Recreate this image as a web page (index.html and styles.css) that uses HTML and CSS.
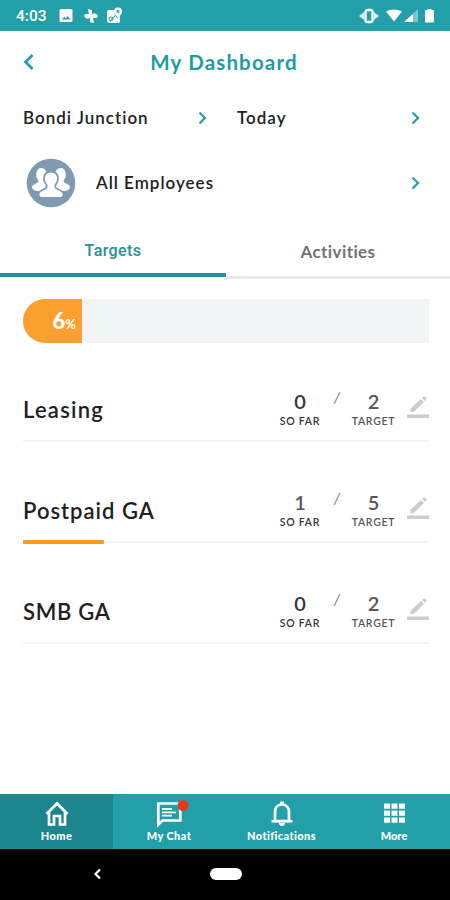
FILE: index.html
```html
<!DOCTYPE html>
<html lang="en">
<head>
<meta charset="utf-8">
<title>My Dashboard</title>
<link rel="stylesheet" href="styles.css">
</head>
<body>
<div class="status">
  <span class="clock">4:03</span>
  <svg class="status-left" width="66" height="18" viewBox="0 0 66 18">
    <path fill="#fff" fill-rule="evenodd" d="M2 2h10q1.500 0 1.500 1.500v10q0 1.500-1.500 1.500h-10q-1.500 0-1.500-1.500v-10q0-1.500 1.500-1.500zM3 12.500h8.500l-2.700-3.500-2 2.300-1.500-1.500z"/>
    <path fill="#fff" d="M29 2l4 1v4q4-2 6 2l-1 2h-4l1 5-4-1v-4q-4 2-6-2l1-2h4z"/>
    <path fill="#fff" d="M50 3h6q-2 5 2 8l3-2v5q0 2-2 2h-9q-2 0-2-2v-9q0-2 2-2z"/>
    <path fill="#fff" d="M59 .5a4 4 0 0 1 4 4q0 3-4 6-4-3-4-6a4 4 0 0 1 4-4z"/>
    <circle cx="59" cy="4.500" r="1.400" fill="#239fa9"/>
    <path d="M51 14l5-5" stroke="#239fa9" fill="none"/>
    <circle cx="52" cy="12" r="2" stroke="#239fa9" fill="none"/>
  </svg>
  <svg class="status-right" width="78" height="18" viewBox="0 0 78 18">
    <path fill="#fff" d="M0 9l5-4v8zM20 9l-5-4v8z" opacity=".8"/>
    <rect x="6.500" y="3" width="7" height="12" rx="2" fill="none" stroke="#fff" stroke-width="2.400"/>
    <path fill="#fff" d="M27 4.500q8-4 16 0l-8 10z"/>
    <path fill="#fff" opacity=".4" d="M59 2v13H45z"/>
    <path fill="#fff" d="M54 7v8h-9z"/>
    <path fill="#fff" d="M67 3h1.500V2h4v1H74q1 0 1 1v10q0 1.500-1 1.500h-7q-1 0-1-1.500V4q0-1 1-1z"/>
  </svg>
</div>
<header class="header">
  <svg class="back" width="12" height="18" viewBox="0 0 12 18"><path d="M9.500 2L2.500 9l7 7"/></svg>
  <h1>My Dashboard</h1>
</header>
<div class="filters">
  <div class="filter place"><span>Bondi Junction</span><svg class="chev" width="9" height="14" viewBox="0 0 9 14"><path d="M1.500 1.500L7 7l-5.500 5.500"/></svg></div>
  <div class="filter"><span>Today</span><svg class="chev" width="9" height="14" viewBox="0 0 9 14"><path d="M1.500 1.500L7 7l-5.500 5.500"/></svg></div>
</div>
<div class="employees">
  <svg width="50" height="50" viewBox="0 0 50 50">
    <circle cx="25" cy="25" r="24.300" fill="#7f9ab1"/>
    <path fill="#fff" d="M15 10c4 0 6 3 5.500 6.500-.3 2-1 3.500-2 4.500 0 3 3 3.500 4 5l-4 7H11q-5-1-5-4c0-3 6-3.500 6.500-5.500 0-1-.5-1.500-1.500-3-1.500-3-1-10.500 4-10.500z"/>
    <path fill="#fff" d="M35 10c-4 0-6 3-5.500 6.500.3 2 1 3.500 2 4.500 0 3-3 3.500-4 5l4 7H39q5-1 5-4c0-3-6-3.500-6.500-5.500 0-1 .5-1.500 1.500-3 1.500-3 1-10.500-4-10.500z"/>
    <path fill="#fff" stroke="#7f9ab1" stroke-width="1.800" d="M25 13.500c5 0 7.500 3.500 7 8-.3 2.500-1.500 4-2.500 5.500-.5 3 .5 3.500 3 4.500 4 1.500 5 3 5 5 0 2.500-1.500 3.500-4 3.500h-17c-2.500 0-4-1-4-3.500 0-2 1-3.500 5-5 2.500-1 3.500-1.500 3-4.500-1-1.500-2.200-3-2.500-5.500-.5-4.500 2-8 7-8z"/>
  </svg>
  <span>All Employees</span>
  <svg class="chev" width="9" height="14" viewBox="0 0 9 14"><path d="M1.500 1.500L7 7l-5.500 5.500"/></svg>
</div>
<nav class="tabs">
  <div class="tab active"><span>Targets</span></div>
  <div class="tab"><span>Activities</span></div>
</nav>
<main>
  <div class="progress"><div class="fill"><b>6</b><small>%</small></div></div>
  <section class="goal">
    <div class="goal-main"><h2 class="leasing">Leasing</h2>
      <div class="num sofar"><strong>0</strong><span>SO FAR</span></div><i>/</i>
      <div class="num"><strong>2</strong><span>TARGET</span></div>
      <svg class="edit" width="22" height="24" viewBox="0 0 22 24"><path d="M3.500 17v-3.200L14 4l3 3L6.700 17zM15 3l1.200-1.200q1-.8 2 0l1 1q.8 1 0 2L18 6z"/><path d="M0 19.500h22v3.500H0z"/></svg>
    </div><div class="track"></div>
  </section>
  <section class="goal">
    <div class="goal-main"><h2>Postpaid GA</h2>
      <div class="num sofar"><strong class="done-count">1</strong><span>SO FAR</span></div><i>/</i>
      <div class="num"><strong>5</strong><span>TARGET</span></div>
      <svg class="edit" width="22" height="24" viewBox="0 0 22 24"><path d="M3.500 17v-3.200L14 4l3 3L6.700 17zM15 3l1.200-1.200q1-.8 2 0l1 1q.8 1 0 2L18 6z"/><path d="M0 19.500h22v3.500H0z"/></svg>
    </div><div class="track"><div class="done" style="width:20%"></div></div>
  </section>
  <section class="goal">
    <div class="goal-main"><h2 class="smb">SMB GA</h2>
      <div class="num sofar"><strong>0</strong><span>SO FAR</span></div><i>/</i>
      <div class="num"><strong>2</strong><span>TARGET</span></div>
      <svg class="edit" width="22" height="24" viewBox="0 0 22 24"><path d="M3.500 17v-3.200L14 4l3 3L6.700 17zM15 3l1.200-1.200q1-.8 2 0l1 1q.8 1 0 2L18 6z"/><path d="M0 19.500h22v3.500H0z"/></svg>
    </div><div class="track"></div>
  </section>
</main>
<nav class="bottom">
  <div class="item current">
    <svg width="28" height="26" viewBox="0 0 28 26"><path class="line" d="M3.500 13L14 2.500 24.500 13M6 11v12.500h5V15h6v8.500h5V11"/></svg><span>Home</span>
  </div>
  <div class="item">
    <svg class="chat" width="34" height="26" viewBox="0 0 34 26"><path class="line" d="M6.300 2.500h22v17H10.500l-4.200 4z"/><path d="M10 8h10M10 11.300h14M10 14.600h10" stroke="#fff" stroke-width="1.800"/><circle cx="31" cy="4.500" r="5.500" fill="#df3b1b"/></svg><span>My Chat</span>
  </div>
  <div class="item">
    <svg width="28" height="26" viewBox="0 0 28 26"><path class="line" d="M14 3.500c-5 0-7 3.500-7 7.500v9h14v-9c0-4-2-7.500-7-7.500z"/><path fill="#fff" d="M12 0.500h4v4h-4zM3.500 19h21v2.500h-21zM11 22h6q0 3-3 3t-3-3z"/></svg><span>Notifications</span>
  </div>
  <div class="item">
    <svg width="28" height="26" viewBox="0 0 28 26"><path fill="#fff" d="M4 2.500h6v5.300H4zm7.500 0h6v5.300h-6zm7.500 0h6v5.300h-6zM4 9.500h6v5.300H4zm7.500 0h6v5.300h-6zm7.500 0h6v5.300h-6zM4 16.500h6v5.300H4zm7.500 0h6v5.300h-6zm7.500 0h6v5.300h-6z"/></svg><span class="more">More</span>
  </div>
</nav>
<div class="system">
  <svg width="9" height="12" viewBox="0 0 9 12"><path d="M7 1.500L2.500 6 7 10.500" fill="none" stroke="#fff" stroke-width="2.200"/></svg>
  <div class="pill"></div>
</div>
</body>
</html>
```
FILE: styles.css
```css
* { box-sizing: border-box; }
body { margin: 0; width: 450px; height: 900px; overflow: hidden; display: flex; flex-direction: column; background: #fff; color: #202022; font-family: Lato, "Open Sans", sans-serif; font-weight: 600; font-variant-ligatures: none; }
svg { display: block; flex: none; }
h1, h2 { margin: 0; font-weight: 600; }
.status { height: 30.500px; flex: none; background: #239fa9; display: flex; align-items: center; padding: 1px 13px 0 16px; }
.clock { color: #fff; font: 500 15.500px/20px Roboto, sans-serif; width: 43px; padding-top: 1px; }
.status-right { margin-left: auto; }
.header { height: 62px; flex: none; display: flex; align-items: center; padding: 0 23px; }
.back path { fill: none; stroke: #239fa9; stroke-width: 2.800; }
h1 { flex: 1; padding-right: 14px; text-align: center; color: #1f9aa3; font-size: 20.500px; font-weight: 700; line-height: 22px; letter-spacing: 1.150px; }
.filters { height: 51px; flex: none; padding: 0 30px 0 23px; display: grid; grid-template-columns: 184px 183px; column-gap: 30px; font-size: 17px; letter-spacing: 1px; }
.filter { display: flex; align-items: center; justify-content: space-between; }
.filter span, .employees span { padding-bottom: 1px; }
.chev path { fill: none; stroke: #239fa9; stroke-width: 2.200; }
.employees { height: 78px; flex: none; padding: 0 30px 0 26px; display: flex; align-items: center; font-size: 17px; letter-spacing: 1px; }
.employees span { margin-left: 20px; }
.employees .chev { margin-left: auto; }
.tabs { height: 57px; display: grid; grid-template-columns: 226px 224px; flex: none; }
.tab { display: flex; justify-content: center; padding-top: 20px; border-bottom: 3px solid #e7e8ea; color: #707173; font-size: 17px; font-weight: 700; line-height: 20px; letter-spacing: .4px; }
.tab.active { height: 55px; border-bottom: 4px solid #1b949d; color: #268f98; font: 500 16px/20px Roboto, sans-serif; padding-top: 19px; }
main { flex: 1; padding: 20px 21px 0 23px; }
.progress { height: 44px; background: #f1f3f5; border-radius: 22px 0 0 22px; }
.fill { width: 59px; height: 44px; background: #fca02d; border-radius: 22px 0 0 22px; color: #fff; display: flex; align-items: baseline; justify-content: flex-end; padding: 8px 6px 0 0; line-height: 28px; }
.fill b { font-size: 22px; }
.fill small { font-size: 13px; font-weight: 700; }
.goal { height: 101px; }
.goal-main { height: 96px; display: grid; grid-template-columns: 250px 54px 20px 53px 29px; align-items: start; }
h2 { font-size: 22px; line-height: 26px; padding-top: 54px; letter-spacing: 1px; white-space: nowrap; }
.leasing { letter-spacing: 1.250px; }
.smb { letter-spacing: .700px; }
.num { padding-top: 47px; display: flex; flex-direction: column; align-items: center; color: #55565a; }
.num strong { font-size: 20px; line-height: 22px; font-weight: 600; }
.sofar { color: #333437; }
.sofar .done-count { color: #55565a; }
.num span { font-size: 10.500px; line-height: 12px; margin-top: 3px; letter-spacing: .750px; white-space: nowrap; }
i { font-weight: 400; font-size: 15px; line-height: 16px; padding-top: 46px; color: #777; text-align: center; }
.edit { margin: 52px 0 0 7px; fill: #ccc; }
.track { height: 4px; background: linear-gradient(#fff 1px, #f3f3f4 1px, #f3f3f4 3px, #fff 3px); }
.done { height: 4px; background: #f79a1e; border-radius: 1px; }
.bottom { height: 55px; flex: none; display: grid; grid-template-columns: 113px 112px 113px 112px; background: #239fa9; color: #fff; }
.item { display: flex; flex-direction: column; align-items: center; padding-top: 7px; font-size: 11px; line-height: 14px; font-weight: 900; letter-spacing: .4px; }
.item span { margin-top: 2px; }
.item .more { letter-spacing: 0; }
.chat { overflow: visible; }
.current { background: #1b868e; }
.line { fill: none; stroke: #fff; stroke-width: 2.700; }
.system { height: 51.500px; flex: none; background: #000; display: flex; align-items: center; padding-left: 93px; }
.pill { width: 32px; height: 12px; border-radius: 6px; background: #fff; margin-left: 108px; }
```
